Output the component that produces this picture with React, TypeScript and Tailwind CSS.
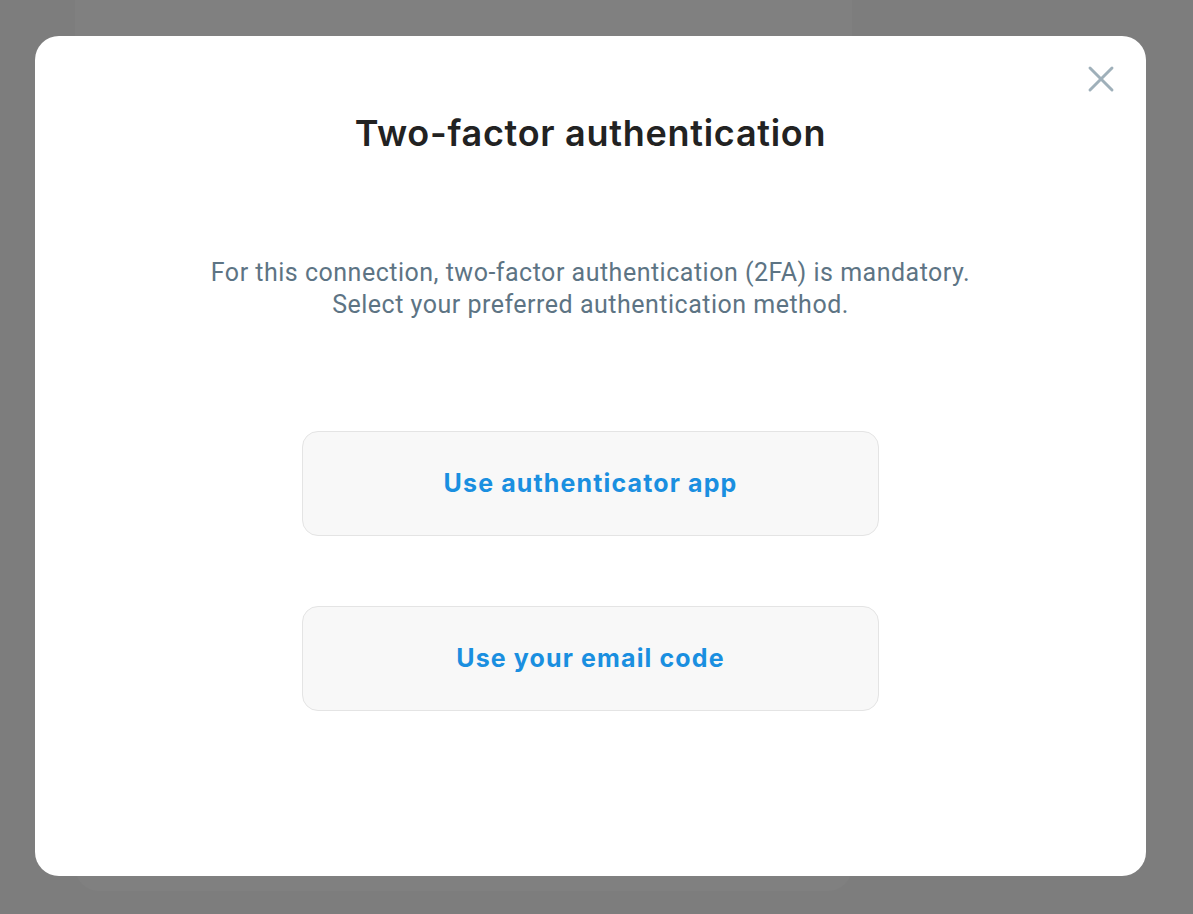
import React from "react";
import { X } from "lucide-react";

const methods = ["Use authenticator app", "Use your email code"];

export default function App() {
  return (
    <div className="relative h-[914px] w-full overflow-hidden bg-[#7d7d7d]">
      {/* page behind the overlay */}
      <div className="ml-[75px] h-[891px] w-[777px] rounded-b-[24px] bg-[#808080]" />

      <div className="absolute left-[35px] top-[36px] flex h-[840px] w-[1111px] flex-col items-center rounded-[24px] bg-white">
        <button className="absolute right-[23px] top-[21px] text-[#9fb0ba]">
          <X size={44} strokeWidth={1.6} />
        </button>

        <h2
          className="mt-[74px] text-[36px] font-semibold leading-[46px] tracking-[0.02em] text-[#222222]"
          style={{ fontFamily: "Inter, 'Noto Sans', sans-serif" }}
        >
          Two-factor authentication
        </h2>

        <p
          className="mt-[101px] text-center text-[25px] leading-[32px] tracking-[0.02em] text-[#5d7484]"
          style={{ fontFamily: "Roboto, sans-serif" }}
        >
          For this connection, two-factor authentication (2FA) is mandatory.
          <br />
          Select your preferred authentication method.
        </p>

        <div className="mt-[110px] flex flex-col gap-[70px]">
          {methods.map((m) => (
            <button
              key={m}
              className="flex h-[105px] w-[577px] items-center justify-center rounded-[16px] border border-[#e4e4e4] bg-[#f8f8f8] text-[25px] font-bold tracking-[0.045em] text-[#1a8fe0]"
              style={{ fontFamily: "Inter, 'Noto Sans', sans-serif" }}
            >
              {m}
            </button>
          ))}
        </div>
      </div>
    </div>
  );
}
